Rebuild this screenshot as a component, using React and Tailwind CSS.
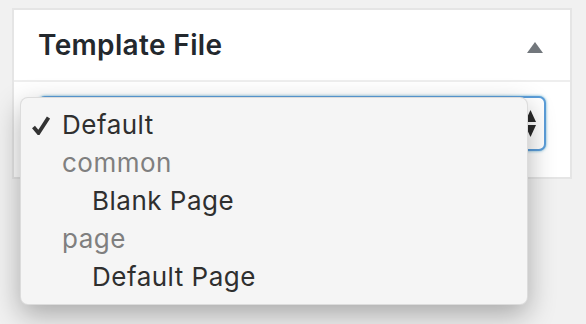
const items = [
  { label: "Default", checked: true },
  { label: "common", group: true },
  { label: "Blank Page", indent: true },
  { label: "page", group: true },
  { label: "Default Page", indent: true },
];

const Check = () => (
  <svg width="18" height="19" viewBox="0 0 18 19" className="block">
    <path d="M1.5 11 L6.5 17 L16.5 1.5" fill="none" stroke="#333" strokeWidth="3.8" strokeLinejoin="miter" strokeLinecap="butt" />
  </svg>
);

const App = () => {
  return (
    <div className="min-h-[324px] bg-[#f1f1f1] pt-2 pl-3 font-['Inter',sans-serif]">
      <div className="w-[560px] border-2 border-[#e5e5e5] bg-white">
        <div className="flex h-[72px] items-center justify-between border-b-2 border-[#eeeeee] pl-6 pr-[27px]">
          <h2 className="text-[28px] font-semibold leading-none tracking-[0.35px] text-[#23282d]">Template File</h2>
          <svg width="16" height="11" viewBox="0 0 16 11" className="mt-1 block">
            <polygon points="8,0 16,11 0,11" fill="#72777c" />
          </svg>
        </div>
        <div className="relative h-[95px] px-6 pt-[14px]">
          <div className="flex h-[55px] items-center justify-end rounded-[7px] border-2 border-[#5b9dd9] bg-white pr-2 shadow-[0_0_3px_rgba(30,140,190,0.7)]">
            <svg width="11" height="27" viewBox="0 0 11 27" className="block">
              <polygon points="5.5,0 11,12 0,12" fill="#2a2a2a" />
              <polygon points="0,15 11,15 5.5,27" fill="#2a2a2a" />
            </svg>
          </div>

          <div className="absolute left-[6px] top-[15px] w-[508px] rounded-[8px] border border-black/10 bg-[#f5f5f5] py-2 shadow-[0_10px_28px_rgba(0,0,0,0.3)]">
            {items.map((item) => (
              <div key={item.label} className="flex h-[38px] items-center">
                <div className="flex w-[41px] justify-start pl-[11px]">
                  {item.checked && <Check />}
                </div>
                <span
                  className={
                    "text-[26px] leading-none tracking-[0.5px] " +
                    (item.group ? "text-[#7f7f7f]" : "text-[#2f2f2f]") +
                    (item.indent ? " pl-[30px]" : "")
                  }
                >
                  {item.label}
                </span>
              </div>
            ))}
          </div>
        </div>
      </div>
    </div>
  );
};

export default App;
